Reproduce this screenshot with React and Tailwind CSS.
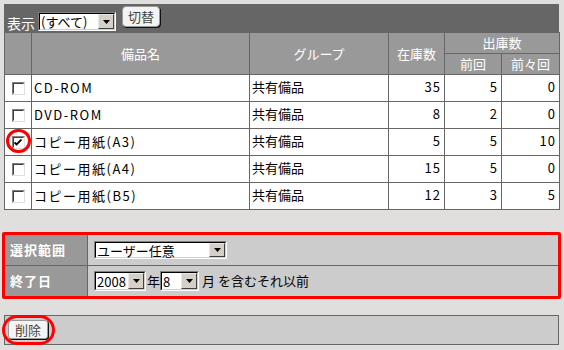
import React from "react";

const rows = [
  { name: "CD-ROM", group: "共有備品", stock: 35, prev: 5, prev2: 0 },
  { name: "DVD-ROM", group: "共有備品", stock: 8, prev: 2, prev2: 0 },
  { name: "コピー用紙(A3)", group: "共有備品", stock: 5, prev: 5, prev2: 10, checked: true },
  { name: "コピー用紙(A4)", group: "共有備品", stock: 15, prev: 5, prev2: 0 },
  { name: "コピー用紙(B5)", group: "共有備品", stock: 12, prev: 3, prev2: 5 },
];

function Arrow() {
  return (
    <div className="flex h-full w-[16px] shrink-0 items-center justify-center border border-t-[#e8e8e8] border-l-[#e8e8e8] border-b-[#404040] border-r-[#404040] bg-[#d4d0c8]">
      <svg width="7" height="4" viewBox="0 0 7 4">
        <path d="M0 0h7L3.5 4z" fill="#000" />
      </svg>
    </div>
  );
}

function Select({ value, className }) {
  return (
    <div className={"flex border border-t-[#808080] border-l-[#808080] border-b-white border-r-white bg-white " + className}>
      <div className="flex h-full w-full items-center border border-t-black border-l-black border-b-[#d4d0c8] border-r-[#d4d0c8]">
        <span className="flex-1 pl-[1px] text-[13px] leading-none text-black">{value}</span>
        <Arrow />
      </div>
    </div>
  );
}

function Checkbox({ checked }) {
  return (
    <div className="mx-auto flex h-[13px] w-[13px] items-center justify-center border border-t-[#808080] border-l-[#808080] border-b-[#e0e0e0] border-r-[#e0e0e0] bg-white">
      <div className="flex h-full w-full items-center justify-center border border-t-[#404040] border-l-[#404040] border-b-white border-r-white">
        {checked ? (
          <svg width="8" height="7" viewBox="0 0 8 7">
            <path d="M0.5 3.5l2 2 5-5" stroke="#000" strokeWidth="1.8" fill="none" />
          </svg>
        ) : null}
      </div>
    </div>
  );
}

export default function App() {
  const th = "border border-[#666] bg-[#999] text-white font-normal text-[13px] text-center";
  const td = "border border-[#666] bg-white text-[13px] leading-[14px] align-top pt-[5px]";
  return (
    <div className="relative h-[350px] w-[564px] overflow-hidden bg-[#e0dfdd] pt-[4px] font-['Noto_Sans_CJK_JP',sans-serif] text-black">
      <div className="ml-[4px] flex h-[28px] w-[555px] items-start bg-[#666] pl-[3px]">
        <span className="mt-[12px] text-[14px] leading-none text-white">表示</span>
        <Select value="(すべて)" className="ml-[3px] mt-[8px] h-[19px] w-[78px]" />
        <button className="ml-[6px] mt-[2px] flex h-[21px] w-[38px] items-center justify-center rounded-[4px] border border-[#999] bg-[#f4f4f4] text-[13px] leading-none text-[#444] shadow-[1px_1px_0_#111]">
          切替
        </button>
      </div>

      <table className="ml-[4px] w-[555px] table-fixed border-collapse">
        <colgroup>
          <col className="w-[27px]" />
          <col className="w-[218px]" />
          <col className="w-[139px]" />
          <col className="w-[56px]" />
          <col className="w-[57px]" />
          <col className="w-[58px]" />
        </colgroup>
        <thead>
          <tr className="h-[21px]">
            <th rowSpan={2} className={th}></th>
            <th rowSpan={2} className={th}>備品名</th>
            <th rowSpan={2} className={th}>グループ</th>
            <th rowSpan={2} className={th}>在庫数</th>
            <th colSpan={2} className={th}>出庫数</th>
          </tr>
          <tr className="h-[21px]">
            <th className={th}>前回</th>
            <th className={th}>前々回</th>
          </tr>
        </thead>
        <tbody>
          {rows.map((r) => (
            <tr key={r.name} className="h-[27px]">
              <td className="border border-[#666] bg-white align-middle">
                <Checkbox checked={r.checked} />
              </td>
              <td className="border border-[#666] bg-white pl-[2px] align-middle text-[13px] leading-[14px] tracking-[1.5px]">{r.name}</td>
              <td className={td + " pl-[2px]"}>{r.group}</td>
              <td className={td + " pr-[3px] text-right tracking-[1px]"}>{r.stock}</td>
              <td className={td + " pr-[3px] text-right tracking-[1px]"}>{r.prev}</td>
              <td className={td + " pr-[3px] text-right tracking-[1px]"}>{r.prev2}</td>
            </tr>
          ))}
        </tbody>
      </table>

      <div className="ml-[2px] mt-[22px] w-[559px] rounded-[2px] border-[3px] border-[#f00]">
        <div className="flex h-[31px] border-b border-[#666]">
          <div className="flex w-[83px] items-center border-r border-[#666] bg-[#999] pl-[5px] text-[13px] font-bold tracking-[1px] text-white">
            選択範囲
          </div>
          <div className="flex flex-1 items-center bg-[#ccc] pl-[6px]">
            <Select value="ユーザー任意" className="h-[18px] w-[133px]" />
          </div>
        </div>
        <div className="flex h-[30px]">
          <div className="flex w-[83px] items-center border-r border-[#666] bg-[#999] pl-[5px] text-[13px] font-bold tracking-[1px] text-white">
            終了日
          </div>
          <div className="flex flex-1 items-center bg-[#ccc] pl-[6px] text-[13px]">
            <Select value="2008" className="h-[20px] w-[52px]" />
            <span className="ml-[1px]">年</span>
            <Select value="8" className="h-[20px] w-[39px]" />
            <span className="ml-[3px]">月 を含むそれ以前</span>
          </div>
        </div>
      </div>

      <div className="ml-[4px] mt-[16px] h-[30px] w-[555px] border border-[#666] bg-[#ccc] pl-[3px] pt-[4px]">
        <button className="flex h-[19px] w-[40px] items-center justify-center rounded-[3px] border border-[#999] bg-[#f4f4f4] text-[13px] leading-none text-[#444] shadow-[1px_1px_0_#111]">
          削除
        </button>
      </div>

      <div className="absolute left-[6px] top-[129px] h-[24px] w-[25px] rounded-full border-[3px] border-[#f00]" />
      <div className="absolute left-[2px] top-[315px] h-[30px] w-[53px] rounded-full border-[3px] border-[#f00]" />
    </div>
  );
}
